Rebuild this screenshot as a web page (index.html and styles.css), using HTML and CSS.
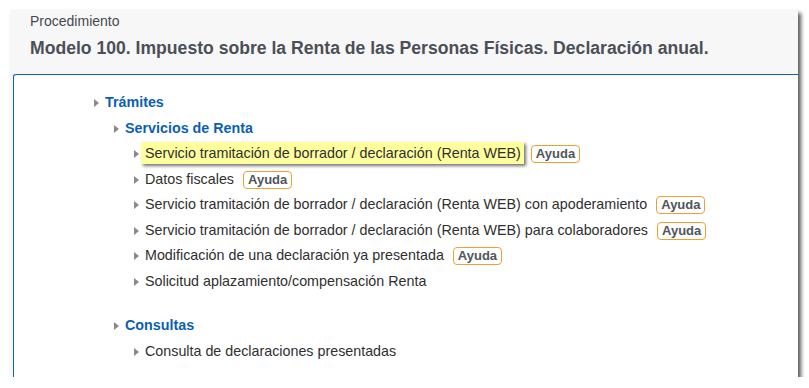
FILE: index.html
```html
<!DOCTYPE html>
<html lang="es">
<head>
    <meta charset="UTF-8">
    <title>Modelo 100</title>
    <link rel="stylesheet" href="styles.css">
</head>
<body>
    <div class="panel">
        <div class="panel-header">
            <div class="kicker">Procedimiento</div>
            <h1>Modelo 100. Impuesto sobre la Renta de las Personas Físicas. Declaración anual.</h1>
        </div>
        <div class="panel-body">
            <ul class="tree">
                <li>
                    <span class="arrow"></span><a class="group" href="#">Trámites</a>
                    <ul>
                        <li>
                            <span class="arrow"></span><a class="group" href="#">Servicios de Renta</a>
                            <ul>
                                <li><span class="arrow"></span><span class="item highlight">Servicio tramitación de borrador / declaración (Renta WEB)</span><span class="help">Ayuda</span></li>
                                <li><span class="arrow"></span><span class="item">Datos fiscales</span><span class="help">Ayuda</span></li>
                                <li><span class="arrow"></span><span class="item">Servicio tramitación de borrador / declaración (Renta WEB) con apoderamiento</span><span class="help">Ayuda</span></li>
                                <li><span class="arrow"></span><span class="item">Servicio tramitación de borrador / declaración (Renta WEB) para colaboradores</span><span class="help">Ayuda</span></li>
                                <li><span class="arrow"></span><span class="item">Modificación de una declaración ya presentada</span><span class="help">Ayuda</span></li>
                                <li><span class="arrow"></span><span class="item">Solicitud aplazamiento/compensación Renta</span></li>
                            </ul>
                        </li>
                        <li class="spaced">
                            <span class="arrow"></span><a class="group" href="#">Consultas</a>
                            <ul>
                                <li><span class="arrow"></span><span class="item">Consulta de declaraciones presentadas</span></li>
                            </ul>
                        </li>
                    </ul>
                </li>
            </ul>
        </div>
    </div>
</body>
</html>
```

FILE: styles.css
```css
body {
    margin: 0;
    background: #ffffff;
    font-family: 'Liberation Sans', Arial, sans-serif;
    color: #333;
}

.panel {
    margin: 10px 0 0 10px;
    width: 788px;
    height: 367px;
    background: #f7f7f7;
    box-shadow: 3px 3px 4px rgba(0, 0, 0, 0.65);
    display: flex;
    flex-direction: column;
}

.panel-header {
    padding: 3px 20px 0 20px;
    height: 64px;
    box-sizing: border-box;
}

.kicker {
    font-size: 14px;
    color: #45494f;
    line-height: 17px;
}

h1 {
    margin: 7px 0 0 0;
    font-size: 17.6px;
    line-height: 22px;
    color: #4b5058;
}

.panel-body {
    flex: 1;
    margin-left: 3px;
    background: #ffffff;
    border-top: 1px solid #0a62b8;
    border-left: 1px solid #0a62b8;
    border-top-left-radius: 3px;
    padding-top: 15px;
}

.tree,
.tree ul {
    list-style: none;
    margin: 0;
    padding: 0 0 0 20px;
}

.tree {
    padding-left: 80px;
}

.tree li {
    line-height: 25.5px;
    font-size: 14.3px;
    white-space: nowrap;
}

.tree li.spaced {
    margin-top: 19px;
}

.arrow {
    display: inline-block;
    width: 0;
    height: 0;
    border-top: 4px solid transparent;
    border-bottom: 4px solid transparent;
    border-left: 5px solid #8a8a8a;
    margin-right: 6px;
    vertical-align: 0;
}

.group {
    color: #0a5fb4;
    font-weight: bold;
    text-decoration: none;
}

.item {
    color: #2f2f2f;
}

.item.highlight {
    background: #ffff9e;
    box-shadow: 2px 2px 3px rgba(0, 0, 0, 0.55);
    padding: 3px 3px 3px 4px;
    margin-left: -4px;
}

.help {
    display: inline-block;
    margin-left: 9px;
    padding: 0 4px;
    line-height: 16px;
    font-size: 13px;
    font-weight: bold;
    color: #50555c;
    border: 1px solid #f0a030;
    border-radius: 4px;
}

.highlight + .help {
    margin-left: 7px;
}
```
